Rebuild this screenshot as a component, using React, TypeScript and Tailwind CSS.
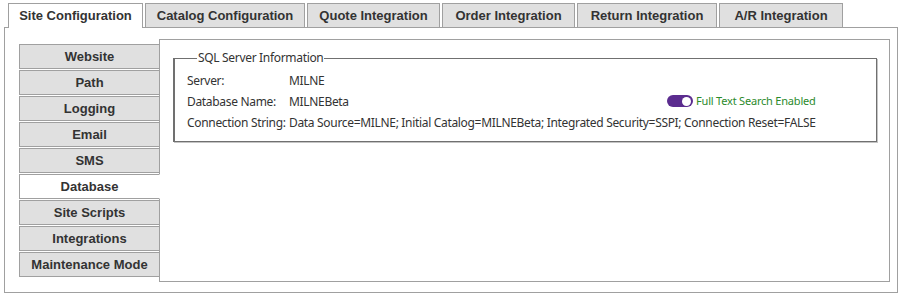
const tabs = [
  { label: 'Site Configuration', w: 'w-[135px]', active: true },
  { label: 'Catalog Configuration', w: 'w-[160px]' },
  { label: 'Quote Integration', w: 'w-[133px]' },
  { label: 'Order Integration', w: 'w-[133px]' },
  { label: 'Return Integration', w: 'w-[140px]' },
  { label: 'A/R Integration', w: 'w-[124px]' },
];

const navItems = [
  'Website',
  'Path',
  'Logging',
  'Email',
  'SMS',
  'Database',
  'Site Scripts',
  'Integrations',
  'Maintenance Mode',
];

const boldFont = "font-['Liberation_Sans',Arial,sans-serif] font-bold text-[13px] text-[#333]";
const bodyFont = "font-['Noto_Sans','Open_Sans',sans-serif] text-[12px] tracking-[-0.32px] text-[#333]";

function Toggle() {
  return (
    <span className="inline-flex items-center gap-[3px]">
      <span className="flex h-[12px] w-[26px] items-center justify-end rounded-full bg-[#5b2c8f] pr-[2px]">
        <span className="h-[9px] w-[9px] rounded-full bg-white" />
      </span>
      <span className="text-[11px] tracking-[-0.2px] text-[#2b8a2b]">Full Text Search Enabled</span>
    </span>
  );
}

export default function App() {
  return (
    <div className="h-[294px] w-[903px] bg-white">
      {/* top tabs */}
      <div className={`flex items-end gap-[2px] pl-[8px] pt-[3px] ${boldFont}`}>
        {tabs.map((t) => (
          <div
            key={t.label}
            className={`${t.w} flex items-center justify-center border border-b-0 border-[#a0a0a0] ${
              t.active ? 'relative z-10 mb-[-1px] h-[25px] bg-white pb-[1px]' : 'h-[24px] bg-[#e0e0e0]'
            }`}
          >
            {t.label}
          </div>
        ))}
      </div>

      <div className="ml-[4px] flex h-[266px] w-[894px] items-start border border-[#a0a0a0] pl-[14px] pt-[11px]">
        {/* left nav */}
        <div className={`relative z-10 mt-[5px] flex w-[141px] flex-col gap-[1px] ${boldFont}`}>
          {navItems.map((n) => (
            <div
              key={n}
              className={`flex h-[25px] items-center justify-center border border-[#a0a0a0] ${
                n === 'Database' ? 'border-r-white bg-white' : 'bg-[#e0e0e0]'
              }`}
            >
              {n}
            </div>
          ))}
        </div>

        {/* content */}
        <div className={`-ml-[1px] h-[243px] w-[731px] border border-[#a0a0a0] pl-[13px] pr-[12px] pt-[10px] ${bodyFont}`}>
          <fieldset className="border-b border-l-2 border-r border-t border-[#707070] pb-[8px] pl-[12px] shadow-[1px_1px_0_#c4c4c4]">
            <legend className="ml-[10px] px-[1px] leading-[16px]">SQL Server Information</legend>
            <div className="w-fit whitespace-nowrap pt-[4px]">
              <div className="flex h-[21px] items-center">
                <span className="w-[102px] shrink-0">Server:</span>
                <span>MILNE</span>
              </div>
              <div className="flex h-[21px] items-center">
                <span className="w-[102px] shrink-0">Database Name:</span>
                <span>MILNEBeta</span>
                <span className="ml-auto">
                  <Toggle />
                </span>
              </div>
              <div className="flex h-[21px] items-center">
                <span className="w-[102px] shrink-0">Connection String:</span>
                <span>Data Source=MILNE; Initial Catalog=MILNEBeta; Integrated Security=SSPI; Connection Reset=FALSE</span>
              </div>
            </div>
          </fieldset>
        </div>
      </div>
    </div>
  );
}
